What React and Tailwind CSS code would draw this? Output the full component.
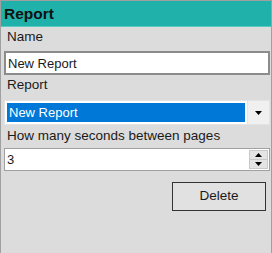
export default function App() {
  return (
    <div
      className="w-[272px] h-[253px] bg-[#dcdcdc] border-l border-t border-r border-[#a0a0a0] flex flex-col text-[13.5px] text-[#1a1a1a]"
      style={{ fontFamily: '"Liberation Sans", Arial, sans-serif' }}
    >
      {/* header */}
      <div className="h-[26px] bg-[#20b2aa] border-b border-[#5cc9c2] flex items-center pl-[3px] shrink-0">
        <span className="text-[15.5px] font-bold leading-none text-[#111]">Report</span>
      </div>

      <div className="h-[16px] leading-[16px] mt-[2px] pl-[6px]">Name</div>
      <div className="mt-[6px] ml-[3px] mr-[1px] h-[24px] bg-white border-2 border-[#8c8c8c] flex items-center pl-[2px]">
        <span className="leading-none text-[13px]">New Report</span>
      </div>

      <div className="h-[16px] leading-[16px] mt-[2px] pl-[6px]">Report</div>
      <div className="mt-[7px] ml-[3px] mr-[1px] h-[25px] bg-white border border-[#e4e4e4] flex items-stretch">
        <div className="flex-1 my-[2px] ml-[2px] mr-[2px] bg-[#0078d7] text-white flex items-center pl-[2px]">
          <span className="leading-none text-[13px]">New Report</span>
        </div>
        <div className="w-[22px] bg-[#f0f0f0] border-l border-[#e4e4e4] flex items-center justify-center">
          <svg width="7" height="4" viewBox="0 0 7 4">
            <path d="M0 0h7L3.5 4z" fill="#000" />
          </svg>
        </div>
      </div>

      <div className="h-[16px] leading-[16px] mt-[3px] pl-[6px] whitespace-nowrap">How many seconds between pages</div>
      <div className="mt-[4px] ml-[3px] mr-[1px] h-[23px] bg-white border border-[#a0a0a0] flex items-stretch">
        <div className="flex-1 flex items-center pl-[2px]">
          <span className="leading-none text-[13px]">3</span>
        </div>
        <div className="w-[19px] my-[1px] mr-[1px] flex flex-col bg-[#dcdcdc]">
          <div className="flex-1 border border-[#c8c8c8] bg-[#e4e4e4] flex items-center justify-center">
            <svg width="7" height="4" viewBox="0 0 7 4">
              <path d="M0 4h7L3.5 0z" fill="#000" />
            </svg>
          </div>
          <div className="flex-1 border border-t-0 border-[#c8c8c8] bg-[#e4e4e4] flex items-center justify-center">
            <svg width="7" height="4" viewBox="0 0 7 4">
              <path d="M0 0h7L3.5 4z" fill="#000" />
            </svg>
          </div>
        </div>
      </div>

      <div className="mt-[11px] flex justify-end pr-[5px]">
        <button className="w-[94px] h-[29px] border border-[#333] bg-[#e1e1e1] flex items-center justify-center text-[13.5px] text-[#1a1a1a]">
          Delete
        </button>
      </div>
    </div>
  );
}
